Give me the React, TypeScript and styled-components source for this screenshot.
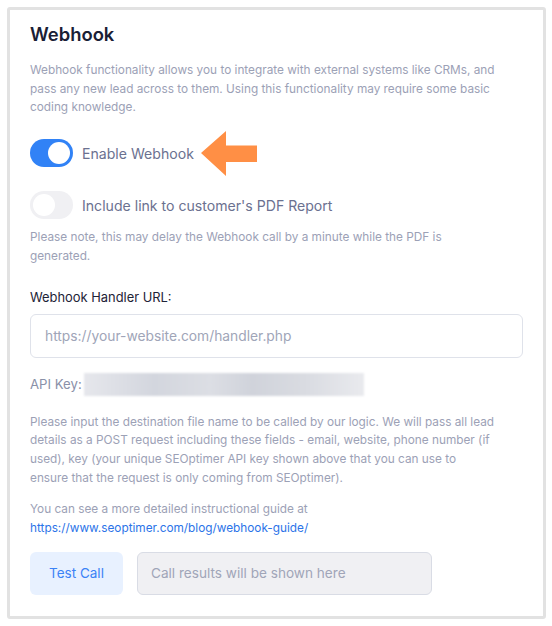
import React, { useState } from 'react';
import styled, { createGlobalStyle } from 'styled-components';

const GlobalStyle = createGlobalStyle`
	body {
		margin: 0;
		background: #ffffff;
		font-family: Inter, "Noto Sans", sans-serif;
	}
`;

const Page = styled.div`
	padding: 7px 6px 7px 7px;
`;

const Card = styled.section`
	position: relative;
	border: 3px solid #e2e2e2;
	border-radius: 3px;
	padding: 9px 20px 22px 20px;
	height: 612px;
	box-sizing: border-box;
`;

const Title = styled.h2`
	margin: 0 0 12px;
	font-size: 18.4px;
	font-weight: 600;
	color: #1a2035;
	line-height: 30px;
`;

const Muted = styled.p<{ $top?: number }>`
	max-width: 468px;
	margin: ${(p) => p.$top ?? 0}px 0 0;
	font-size: 11.8px;
	line-height: 18.7px;
	color: #9ca1b6;
`;

const ToggleRow = styled.label<{ $top: number }>`
	display: flex;
	align-items: center;
	gap: 9px;
	margin-top: ${(p) => p.$top}px;
	cursor: pointer;
`;

const Track = styled.span<{ $on: boolean }>`
	position: relative;
	flex: none;
	width: 43px;
	height: 28px;
	border-radius: 14px;
	background: ${(p) => (p.$on ? '#3182f6' : '#f0f0f3')};

	&::after {
		content: '';
		position: absolute;
		top: 3px;
		left: ${(p) => (p.$on ? '18px' : '3px')};
		width: 22px;
		height: 22px;
		border-radius: 50%;
		background: #ffffff;
	}
`;

const ToggleLabel = styled.span`
	font-size: 14.1px;
	color: #6b7190;
`;

const FieldLabel = styled.div`
	margin-top: 24px;
	font-size: 12.9px;
	color: #1e2337;
`;

const TextInput = styled.input`
	display: block;
	box-sizing: border-box;
	width: 100%;
	height: 44px;
	margin-top: 9px;
	padding: 0 14px;
	border: 1px solid #dfe2ea;
	border-radius: 6px;
	font-family: inherit;
	font-size: 13.8px;
	color: #1e2337;
	outline: none;

	&::placeholder {
		color: #a0a5b8;
	}
`;

const KeyRow = styled.div`
	display: flex;
	align-items: center;
	margin-top: 15px;
	font-size: 13.2px;
	color: #8a90a8;
`;

const Blurred = styled.span`
	display: block;
	width: 280px;
	height: 23px;
	margin-left: 2px;
	background: linear-gradient(90deg, #e6e7ec, #d3d6de 25%, #dcdee4 45%, #d0d3db 60%, #dadce2 80%, #e9eaee);
	filter: blur(1px);
`;

const Link = styled.a`
	color: #2b73e8;
	text-decoration: none;
`;

const Actions = styled.div`
	display: flex;
	gap: 14px;
	margin-top: 14px;
`;

const TestButton = styled.button`
	height: 43px;
	width: 93px;
	border: none;
	border-radius: 6px;
	background: #e8f1ff;
	color: #3b82f6;
	font-family: inherit;
	font-size: 13.5px;
	cursor: pointer;
`;

const Result = styled.div`
	box-sizing: border-box;
	display: flex;
	align-items: center;
	width: 295px;
	height: 43px;
	padding: 0 13px;
	border: 1px solid #d9dce5;
	border-radius: 6px;
	background: #f0f0f3;
	font-size: 13.6px;
	color: #a0a5b8;
`;

// annotation arrow pointing at the toggle label
const Arrow = styled.svg`
	position: absolute;
	left: 181px;
	top: 110px;
`;

export default function App() {
	const [enabled, setEnabled] = useState(true);
	const [pdf, setPdf] = useState(false);

	return (
		<Page>
			<GlobalStyle />
			<Card>
				<Title>Webhook</Title>
				<Muted>
					Webhook functionality allows you to integrate with external systems like CRMs, and
					pass any new lead across to them. Using this functionality may require some basic
					coding knowledge.
				</Muted>
				<ToggleRow $top={22} onClick={() => setEnabled(!enabled)}>
					<Track $on={enabled} />
					<ToggleLabel>Enable Webhook</ToggleLabel>
				</ToggleRow>
				<ToggleRow $top={24} onClick={() => setPdf(!pdf)}>
					<Track $on={pdf} />
					<ToggleLabel>Include link to customer's PDF Report</ToggleLabel>
				</ToggleRow>
				<Muted $top={9}>
					Please note, this may delay the Webhook call by a minute while the PDF is generated.
				</Muted>
				<FieldLabel>Webhook Handler URL:</FieldLabel>
				<TextInput placeholder="https://your-website.com/handler.php" />
				<KeyRow>
					API Key:
					<Blurred />
				</KeyRow>
				<Muted $top={17}>
					Please input the destination file name to be called by our logic. We will pass all
					lead details as a POST request including these fields - email, website, phone number
					(if used), key (your unique SEOptimer API key shown above that you can use to
					<br />
					ensure that the request is only coming from SEOptimer).
				</Muted>
				<Muted $top={13}>
					You can see a more detailed instructional guide at
					<br />
					<Link href="#">https://www.seoptimer.com/blog/webhook-guide/</Link>
				</Muted>
				<Actions>
					<TestButton>Test Call</TestButton>
					<Result>Call results will be shown here</Result>
				</Actions>
				<Arrow width="70" height="60" viewBox="0 0 70 60">
					<polygon points="10,33 35,11 35,25.5 66,25.5 66,42 35,42 35,56" fill="#ff8f45" />
				</Arrow>
			</Card>
		</Page>
	);
}
